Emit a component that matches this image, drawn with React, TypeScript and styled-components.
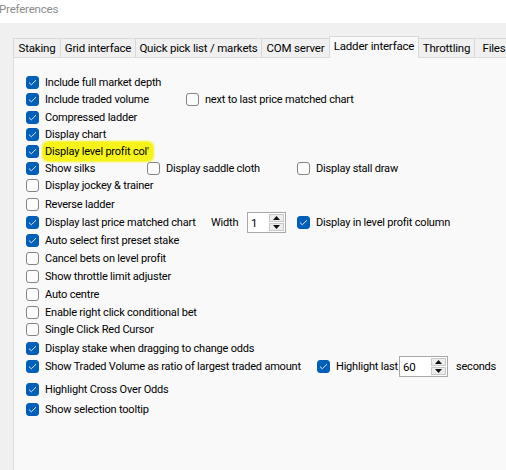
import React from "react";
import styled, { createGlobalStyle } from "styled-components";

const GlobalStyle = createGlobalStyle`
  html, body {
    margin: 0;
    padding: 0;
    background: #ffffff;
    overflow: hidden;
  }
  body {
    font-family: "Roboto", "Liberation Sans", sans-serif;
    font-size: 11px;
    letter-spacing: -0.2px;
    color: #000;
  }
`;

const Window = styled.div`
  width: 506px;
  height: 470px;
  display: flex;
  flex-direction: column;
  background: #f0f0f0;
  overflow: hidden;
`;

const TitleBar = styled.div`
  height: 23px;
  flex-shrink: 0;
  background: #ffffff;
  display: flex;
  align-items: center;
  margin-left: -1px;
  color: #8c8c8c;
  font-size: 11.5px;
  padding-bottom: 5px;
  box-sizing: border-box;
`;

const Body = styled.div`
  flex: 1;
  display: flex;
  flex-direction: column;
  padding: 13px 0 0 13px;
`;

const TabStrip = styled.div`
  display: flex;
  align-items: flex-end;
  height: 21px;
  padding-left: 1px;
`;

const Tab = styled.div<{ $w: number; $active?: boolean }>`
  box-sizing: border-box;
  width: ${(p) => p.$w}px;
  flex-shrink: 0;
  height: ${(p) => (p.$active ? 22 : 19)}px;
  margin-bottom: ${(p) => (p.$active ? -1 : 0)}px;
  margin-left: -1px;
  border: 1px solid #d9d9d9;
  border-bottom: none;
  background: ${(p) => (p.$active ? "#f9f9f9" : "#f0f0f0")};
  position: ${(p) => (p.$active ? "relative" : "static")};
  z-index: ${(p) => (p.$active ? 1 : 0)};
  display: flex;
  align-items: center;
  justify-content: center;
  padding-bottom: ${(p) => (p.$active ? 4 : 0)}px;
  white-space: nowrap;
  font-size: 11.5px;
  color: #000;
`;

const Panel = styled.div`
  flex: 1;
  background: #f9f9f9;
  border-top: 1px solid #dcdcdc;
  border-left: 1px solid #dcdcdc;
  padding: 16px 0 0 12px;
  display: flex;
  flex-direction: column;
`;

const Row = styled.div<{ $gap: number }>`
  display: flex;
  align-items: center;
  height: 17px;
  margin-top: ${(p) => p.$gap}px;
  white-space: nowrap;
`;

const Field = styled.div<{ $w?: number }>`
  display: flex;
  align-items: center;
  flex-shrink: 0;
  width: ${(p) => (p.$w ? `${p.$w}px` : "auto")};
`;

const Box = styled.span<{ $on: boolean }>`
  box-sizing: border-box;
  width: 13px;
  height: 13px;
  flex-shrink: 0;
  border-radius: 3px;
  border: 1px solid ${(p) => (p.$on ? "#005fb8" : "#858585")};
  background: ${(p) => (p.$on ? "#005fb8" : "#fcfcfc")};
  display: flex;
  align-items: center;
  justify-content: center;
  margin-right: 6px;
`;

const Label = styled.span`
  line-height: 17px;
`;

const Marker = styled.span`
  background: #f6f31a;
  border-radius: 5px;
  padding: 3px 4px 3px 2px;
  margin-left: -2px;
  box-shadow: 0 0 2px 1px #f6f31a;
`;

const Text = styled.span`
  line-height: 17px;
`;

const Seconds = styled.span`
  line-height: 17px;
  margin-left: 8px;
`;

const Spin = styled.div<{ $w: number; $ml?: number }>`
  box-sizing: border-box;
  width: ${(p) => p.$w}px;
  height: 21px;
  flex-shrink: 0;
  margin-right: ${(p) => p.$ml ?? 0}px;
  border: 1px solid #a8a8a8;
  background: #ffffff;
  display: flex;
  align-items: stretch;
`;

const SpinValue = styled.div`
  flex: 1;
  padding-left: 3px;
  display: flex;
  align-items: center;
  font-size: 11.5px;
`;

const SpinButtons = styled.div`
  width: 15px;
  display: flex;
  flex-direction: column;
  padding: 1px 1px 1px 0;
  gap: 1px;
`;

const SpinButton = styled.div`
  flex: 1;
  background: #ededed;
  border: 1px solid #c8c8c8;
  display: flex;
  align-items: center;
  justify-content: center;
`;

function Check({ on }: { on: boolean }) {
  return (
    <Box $on={on}>
      {on && (
        <svg width="9" height="7" viewBox="0 0 9 7">
          <path d="M1 3.6 L3.3 5.8 L8 1.2" fill="none" stroke="#dce9f7" strokeWidth="1" />
        </svg>
      )}
    </Box>
  );
}

function CheckField({ on, label, w }: { on: boolean; label: React.ReactNode; w?: number }) {
  return (
    <Field $w={w}>
      <Check on={on} />
      <Label>{label}</Label>
    </Field>
  );
}

function SpinBox({ value, w, after }: { value: string; w: number; after?: number }) {
  return (
    <Spin $w={w} $ml={after}>
      <SpinValue>{value}</SpinValue>
      <SpinButtons>
        <SpinButton>
          <svg width="7" height="4" viewBox="0 0 7 4">
            <path d="M0 4 L3.5 0 L7 4 Z" fill="#111" />
          </svg>
        </SpinButton>
        <SpinButton>
          <svg width="7" height="4" viewBox="0 0 7 4">
            <path d="M0 0 L3.5 4 L7 0 Z" fill="#111" />
          </svg>
        </SpinButton>
      </SpinButtons>
    </Spin>
  );
}

const tabs = [
  { name: "Staking", w: 48 },
  { name: "Grid interface", w: 76 },
  { name: "Quick pick list / markets", w: 127 },
  { name: "COM server", w: 69 },
  { name: "Ladder interface", w: 90, active: true },
  { name: "Throttling", w: 57 },
  { name: "Files", w: 40 },
];

export default function App() {
  return (
    <Window>
      <GlobalStyle />
      <TitleBar>Preferences</TitleBar>
      <Body>
        <TabStrip>
          {tabs.map((t) => (
            <Tab key={t.name} $w={t.w} $active={t.active}>
              {t.name}
            </Tab>
          ))}
        </TabStrip>
        <Panel>
          <Row $gap={0}>
            <CheckField on label="Include full market depth" />
          </Row>
          <Row $gap={0}>
            <CheckField on label="Include traded volume" w={160} />
            <CheckField on={false} label="next to last price matched chart" />
          </Row>
          <Row $gap={1}>
            <CheckField on label="Compressed ladder" />
          </Row>
          <Row $gap={0}>
            <CheckField on label="Display chart" />
          </Row>
          <Row $gap={0}>
            <CheckField on label={<Marker>Display level profit col'</Marker>} />
          </Row>
          <Row $gap={0}>
            <CheckField on label="Show silks" w={121} />
            <CheckField on={false} label="Display saddle cloth" w={150} />
            <CheckField on={false} label="Display stall draw" />
          </Row>
          <Row $gap={0}>
            <CheckField on={false} label="Display jockey & trainer" />
          </Row>
          <Row $gap={2}>
            <CheckField on={false} label="Reverse ladder" />
          </Row>
          <Row $gap={1}>
            <CheckField on label="Display last price matched chart" w={185} />
            <Field $w={36}>
              <Text>Width</Text>
            </Field>
            <SpinBox value="1" w={39} after={11} />
            <CheckField on label="Display in level profit column" />
          </Row>
          <Row $gap={1}>
            <CheckField on label="Auto select first preset stake" />
          </Row>
          <Row $gap={1}>
            <CheckField on={false} label="Cancel bets on level profit" />
          </Row>
          <Row $gap={1}>
            <CheckField on={false} label="Show throttle limit adjuster" />
          </Row>
          <Row $gap={1}>
            <CheckField on={false} label="Auto centre" />
          </Row>
          <Row $gap={1}>
            <CheckField on={false} label="Enable right click conditional bet" />
          </Row>
          <Row $gap={0}>
            <CheckField on={false} label="Single Click Red Cursor" />
          </Row>
          <Row $gap={2}>
            <CheckField on label="Display stake when dragging to change odds" />
          </Row>
          <Row $gap={1}>
            <CheckField on label="Show Traded Volume as ratio of largest traded amount" w={291} />
            <CheckField on label="Highlight last" w={82} />
            <SpinBox value="60" w={49} />
            <Seconds>seconds</Seconds>
          </Row>
          <Row $gap={6}>
            <CheckField on label="Highlight Cross Over Odds" />
          </Row>
          <Row $gap={3}>
            <CheckField on label="Show selection tooltip" />
          </Row>
        </Panel>
      </Body>
    </Window>
  );
}
